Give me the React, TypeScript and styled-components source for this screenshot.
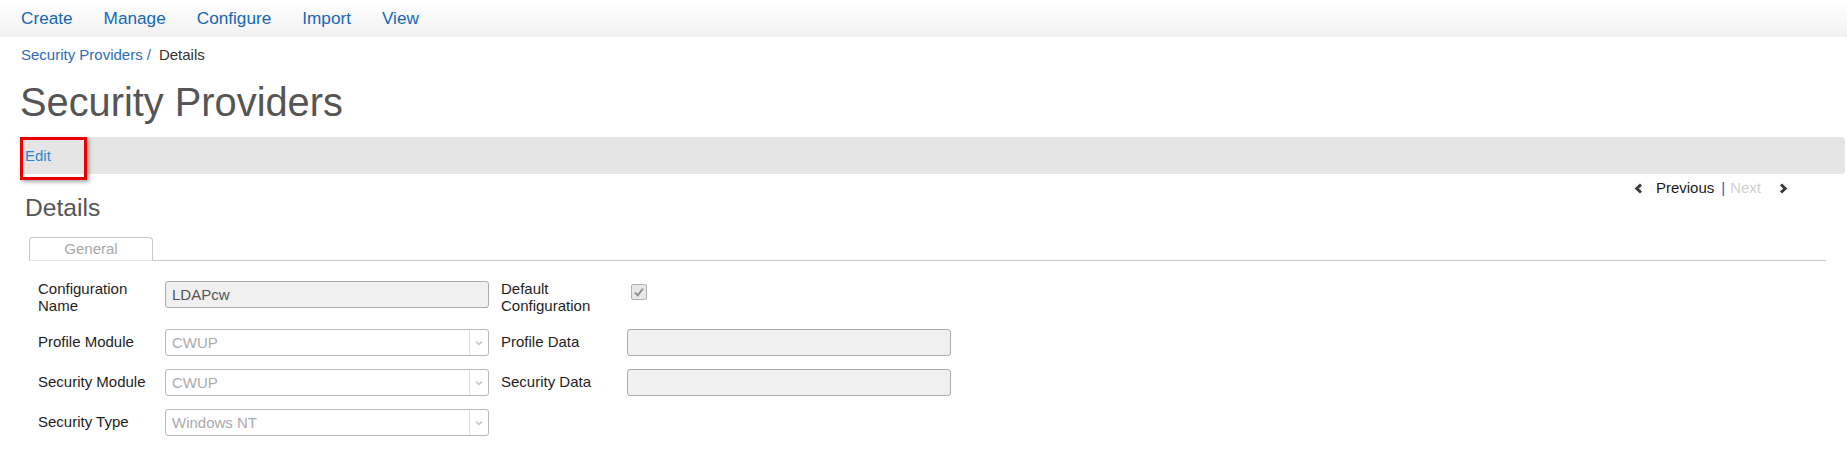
import React from "react";
import styled, { createGlobalStyle } from "styled-components";

const Global = createGlobalStyle`
  html, body { margin: 0; padding: 0; background: #fff; }
  body { font-family: "Liberation Sans", Arial, sans-serif; color: #222; }
  * { box-sizing: border-box; }
`;

const NavBar = styled.nav`
  height: 37px;
  display: flex;
  align-items: center;
  gap: 31px;
  padding-left: 21px;
  background: linear-gradient(#ffffff, #f1f1f1);
`;

const NavLink = styled.a`
  font-size: 17.2px;
  line-height: 37px;
  color: #1466b8;
  text-decoration: none;
  cursor: pointer;
`;

const Page = styled.main`
  padding: 0 2px 0 20px;
  display: flex;
  flex-direction: column;
`;

const Breadcrumb = styled.div`
  margin-top: 8px;
  padding-left: 1px;
  font-size: 15px;
  line-height: 20px;
  display: flex;
  align-items: baseline;
`;

const Crumb = styled.a`
  color: #2d6db4;
  text-decoration: none;
`;

const CrumbSep = styled.span`
  color: #2d6db4;
  margin: 0 8px 0 4px;
`;

const CrumbCurrent = styled.span`
  color: #333;
`;

const Title = styled.h1`
  margin: 15px 0 0 0;
  font-size: 39.8px;
  line-height: 44px;
  font-weight: normal;
  color: #555;
`;

const ActionBar = styled.div`
  position: relative;
  margin-top: 13px;
  height: 37px;
  background: #e5e5e5;
  border-radius: 4px;
  padding-left: 5px;
  display: flex;
  align-items: center;
`;

const ActionLink = styled.a`
  font-size: 15px;
  line-height: 37px;
  color: #2b86d0;
  text-decoration: none;
`;

const Highlight = styled.span`
  position: absolute;
  left: 0;
  top: 0;
  width: 67px;
  height: 43px;
  border: 3px solid #e60000;
  box-shadow: 2px 2px 4px rgba(0, 0, 0, 0.35);
  pointer-events: none;
`;

const DetailsSection = styled.section`
  padding: 0 19px 0 4px;
  display: flex;
  flex-direction: column;
`;

const SectionHeader = styled.div`
  margin-top: 4px;
  display: flex;
  justify-content: space-between;
  align-items: flex-start;
`;

const SectionTitle = styled.h3`
  margin: 16px 0 0 1px;
  font-size: 24.6px;
  line-height: 28px;
  font-weight: normal;
  color: #555;
`;

const Pager = styled.div`
  display: flex;
  align-items: center;
  height: 20px;
  margin-right: 38px;
  font-size: 15px;
  line-height: 20px;
`;

const PagerArrow = styled.span<{ $gapLeft?: number; $gapRight?: number }>`
  display: inline-flex;
  margin-left: ${(p) => p.$gapLeft ?? 0}px;
  margin-right: ${(p) => p.$gapRight ?? 0}px;
`;

const PagerText = styled.span<{ $disabled?: boolean }>`
  color: ${(p) => (p.$disabled ? "#cfcfcf" : "#1a1a1a")};
`;

const PagerDivider = styled.span`
  color: #1466b8;
  margin: 0 5px 0 7px;
`;

const TabStrip = styled.div`
  margin: 15px 0 0 5px;
  height: 24px;
  border-bottom: 1px solid #c8c8c8;
  display: flex;
  align-items: flex-start;
`;

const Tab = styled.div`
  width: 124px;
  height: 24px;
  margin-bottom: -1px;
  border: 1px solid #c8c8c8;
  border-bottom-color: #e6e6e6;
  border-radius: 4px 4px 0 0;
  background: #fff;
  text-align: center;
  font-size: 15px;
  line-height: 22px;
  color: #a8a8a8;
`;

const FormGrid = styled.div`
  margin: 20px 0 0 14px;
  display: grid;
  grid-template-columns: 127px 336px 126px 324px;
  row-gap: 13px;
  align-items: center;
`;

const Label = styled.label<{ $top?: boolean }>`
  font-size: 15px;
  line-height: 16.5px;
  color: #1e1e1e;
  padding-right: 8px;
  padding-bottom: ${(p) => (p.$top ? 2 : 0)}px;
  align-self: ${(p) => (p.$top ? "start" : "center")};
`;

const TextBox = styled.div<{ $top?: boolean }>`
  width: 324px;
  height: 27px;
  border: 1px solid #ababab;
  border-radius: 3px;
  background: #f0f0f0;
  padding: 0 6px;
  font-size: 15px;
  line-height: 25px;
  color: #555;
  align-self: ${(p) => (p.$top ? "start" : "center")};
`;

const SelectBox = styled.div`
  width: 324px;
  height: 27px;
  border: 1px solid #b8b8b8;
  border-radius: 3px;
  background: #fff;
  display: flex;
  font-size: 15px;
  line-height: 25px;
  color: #ababab;
`;

const SelectValue = styled.span`
  flex: 1;
  padding-left: 6px;
`;

const SelectArrow = styled.span`
  width: 19px;
  border-left: 1px solid #dedede;
  display: flex;
  align-items: center;
  justify-content: center;
`;

const CheckBox = styled.span`
  align-self: start;
  margin: 3px 0 0 4px;
  width: 16px;
  height: 16px;
  border: 1px solid #b3b3b3;
  border-radius: 2px;
  background: #e8e8e8;
  display: flex;
  align-items: center;
  justify-content: center;
`;

const Empty = styled.span``;

const ChevronLeft = () => (
  <svg width="9" height="11" viewBox="0 0 9 11">
    <polyline points="7,1.5 2.8,5.5 7,9.5" fill="none" stroke="#3a3a3a" strokeWidth="3" />
  </svg>
);

const ChevronRight = () => (
  <svg width="9" height="11" viewBox="0 0 9 11">
    <polyline points="2,1.5 6.2,5.5 2,9.5" fill="none" stroke="#3a3a3a" strokeWidth="3" />
  </svg>
);

const DropArrow = () => (
  <svg width="8" height="6" viewBox="0 0 8 6">
    <polyline points="1,1.5 4,4.5 7,1.5" fill="none" stroke="#c4c4c4" strokeWidth="1.5" />
  </svg>
);

const CheckMark = () => (
  <svg width="12" height="12" viewBox="0 0 12 12">
    <polyline points="2,6.5 4.8,9.3 10,2.5" fill="none" stroke="#8c8c8c" strokeWidth="1.8" />
  </svg>
);

const Select = ({ value }: { value: string }) => (
  <SelectBox>
    <SelectValue>{value}</SelectValue>
    <SelectArrow>
      <DropArrow />
    </SelectArrow>
  </SelectBox>
);

export default function App() {
  return (
    <>
      <Global />
      <NavBar>
        {["Create", "Manage", "Configure", "Import", "View"].map((n) => (
          <NavLink key={n}>{n}</NavLink>
        ))}
      </NavBar>
      <Page>
        <Breadcrumb>
          <Crumb>Security Providers</Crumb>
          <CrumbSep>/</CrumbSep>
          <CrumbCurrent>Details</CrumbCurrent>
        </Breadcrumb>
        <Title>Security Providers</Title>
        <ActionBar>
          <ActionLink>Edit</ActionLink>
          <Highlight />
        </ActionBar>
        <DetailsSection>
          <SectionHeader>
            <SectionTitle>Details</SectionTitle>
            <Pager>
              <PagerArrow $gapRight={13}>
                <ChevronLeft />
              </PagerArrow>
              <PagerText>Previous</PagerText>
              <PagerDivider>|</PagerDivider>
              <PagerText $disabled>Next</PagerText>
              <PagerArrow $gapLeft={18}>
                <ChevronRight />
              </PagerArrow>
            </Pager>
          </SectionHeader>
          <TabStrip>
            <Tab>General</Tab>
          </TabStrip>
          <FormGrid>
            <Label $top>Configuration Name</Label>
            <TextBox $top>LDAPcw</TextBox>
            <Label $top>Default Configuration</Label>
            <CheckBox>
              <CheckMark />
            </CheckBox>

            <Label>Profile Module</Label>
            <Select value="CWUP" />
            <Label>Profile Data</Label>
            <TextBox />

            <Label>Security Module</Label>
            <Select value="CWUP" />
            <Label>Security Data</Label>
            <TextBox />

            <Label>Security Type</Label>
            <Select value="Windows NT" />
            <Empty />
            <Empty />
          </FormGrid>
        </DetailsSection>
      </Page>
    </>
  );
}
